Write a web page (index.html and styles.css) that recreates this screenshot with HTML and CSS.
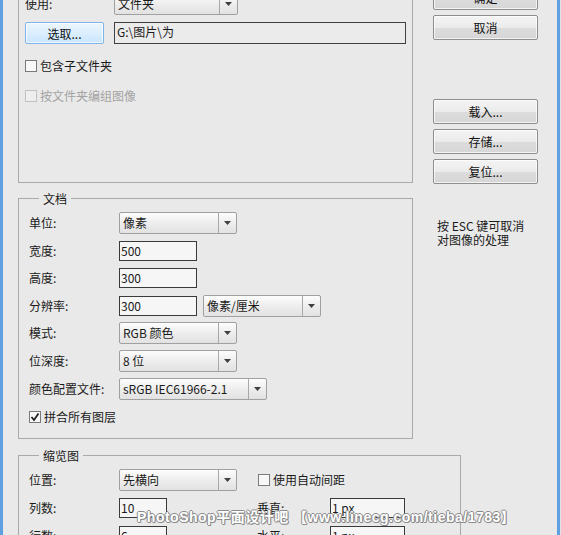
FILE: index.html
```html
<!DOCTYPE html>
<html lang="zh-CN">
<head>
<meta charset="utf-8">
<title>联系表</title>
<link rel="stylesheet" href="styles.css">
</head>
<body>
<div class="win">
  <div class="layout">
    <div class="grp src">
      <div class="row r-use">
        <span class="lbl l89">使用:</span>
        <div class="sel w124"><span class="sel-val">文件夹</span><span class="sel-btn"><svg width="7" height="4" viewBox="0 0 7 4"><path d="M0 0h7L3.5 4z" fill="#404040"/></svg></span></div>
      </div>
      <div class="row r-pick">
        <span class="btn blue w79">选取...</span>
        <span class="path">G:\图片\为</span>
      </div>
      <label class="chk r-c1"><span class="box"></span>包含子文件夹</label>
      <label class="chk dis r-c2"><span class="box"></span>按文件夹编组图像</label>
    </div>

    <div class="side">
      <span class="btn">确定</span>
      <span class="btn">取消</span>
      <span class="btn mt">载入...</span>
      <span class="btn">存储...</span>
      <span class="btn">复位...</span>
      <p class="esc">按 ESC 键可取消<br>对图像的处理</p>
    </div>

    <fieldset class="grp doc">
      <legend>文档</legend>
      <div class="rows">
        <div class="row"><span class="lbl">单位:</span><div class="sel w118"><span class="sel-val">像素</span><span class="sel-btn"><svg width="7" height="4" viewBox="0 0 7 4"><path d="M0 0h7L3.5 4z" fill="#404040"/></svg></span></div></div>
        <div class="row"><span class="lbl">宽度:</span><span class="inp w78">500</span></div>
        <div class="row"><span class="lbl">高度:</span><span class="inp w78">300</span></div>
        <div class="row"><span class="lbl">分辨率:</span><span class="inp w78">300</span><div class="sel w118 ml6"><span class="sel-val">像素/厘米</span><span class="sel-btn"><svg width="7" height="4" viewBox="0 0 7 4"><path d="M0 0h7L3.5 4z" fill="#404040"/></svg></span></div></div>
        <div class="row"><span class="lbl">模式:</span><div class="sel w118"><span class="sel-val">RGB 颜色</span><span class="sel-btn"><svg width="7" height="4" viewBox="0 0 7 4"><path d="M0 0h7L3.5 4z" fill="#404040"/></svg></span></div></div>
        <div class="row"><span class="lbl">位深度:</span><div class="sel w118"><span class="sel-val">8 位</span><span class="sel-btn"><svg width="7" height="4" viewBox="0 0 7 4"><path d="M0 0h7L3.5 4z" fill="#404040"/></svg></span></div></div>
        <div class="row"><span class="lbl">颜色配置文件:</span><div class="sel w148"><span class="sel-val">sRGB IEC61966-2.1</span><span class="sel-btn"><svg width="7" height="4" viewBox="0 0 7 4"><path d="M0 0h7L3.5 4z" fill="#404040"/></svg></span></div></div>
      </div>
      <label class="chk r-flat"><span class="box on"><svg width="10" height="10" viewBox="0 0 10 10"><path d="M1.5 5l2.5 3L8.5 1.5" fill="none" stroke="#222" stroke-width="1.8"/></svg></span>拼合所有图层</label>
    </fieldset>

    <fieldset class="grp thumb">
      <legend>缩览图</legend>
      <div class="rows t-rows">
        <div class="row"><span class="lbl">位置:</span><div class="sel w118"><span class="sel-val">先横向</span><span class="sel-btn"><svg width="7" height="4" viewBox="0 0 7 4"><path d="M0 0h7L3.5 4z" fill="#404040"/></svg></span></div>
          <label class="chk ml21"><span class="box"></span>使用自动间距</label></div>
        <div class="row"><span class="lbl">列数:</span><span class="inp w48">10</span><span class="lbl2">垂直:</span><span class="inp w75">1 px</span></div>
        <div class="row"><span class="lbl">行数:</span><span class="inp w48">6</span><span class="lbl2">水平:</span><span class="inp w75">1 px</span></div>
      </div>
    </fieldset>
  </div>
</div>
<div class="wm">PhotoShop平面设计吧 【www.linecg.com/tieba/1783】</div>
</body>
</html>
```

FILE: styles.css
```css
* { box-sizing: border-box; }
html, body { margin: 0; padding: 0; }
body {
  background: #dfe3e8;
  font-family: "Noto Sans CJK SC", "Liberation Sans", sans-serif;
  font-size: 12px;
  color: #1a1a1a;
  width: 561px;
  height: 535px;
  overflow: hidden;
  position: relative;
}
.win {
  width: 560px;
  height: 535px;
  background: #e9e9e9;
  border-left: 3px solid #5fa0e2;
  border-right: 3px solid #5fa0e2;
  padding-left: 15px;
  overflow: hidden;
}
.layout {
  margin-top: -30px;
  display: grid;
  grid-template-columns: 395px 105px;
  column-gap: 20px;
  align-items: start;
}
.grp {
  border: 1px solid #a9a9a9;
  margin: 0;
}
.src {
  grid-column: 1;
  grid-row: 1;
  height: 213px;
  padding: 22px 0 0 6px;
}
.side {
  grid-column: 2;
  grid-row: 1 / span 2;
  padding-top: 15px;
  display: flex;
  flex-direction: column;
  gap: 5px;
}
.row {
  display: flex;
  align-items: center;
  height: 22px;
}
.lbl { width: 90px; flex: none; line-height: 16px; }
.l89 { width: 89px; }
.lbl2 { width: 73px; margin-left: 90px; flex: none; line-height: 16px; }
.r-pick { margin-top: 7px; }
.r-c1 { margin-top: 14px; }
.r-c2 { margin-top: 14px; }

.sel {
  display: flex;
  height: 22px;
  border: 1px solid #a0a0a0;
  border-radius: 2px;
  background: linear-gradient(#fdfdfd, #ececec 55%, #e2e2e2);
  flex: none;
}
.sel-val { flex: 1; padding-left: 3px; line-height: 19px; white-space: nowrap; overflow: hidden; }
.sel-btn {
  width: 18px;
  border-left: 1px solid #a8a8a8;
  display: flex;
  align-items: center;
  justify-content: center;
}
.w118 { width: 118px; }
.w124 { width: 124px; }
.w148 { width: 148px; }
.ml6 { margin-left: 6px; }
.ml21 { margin-left: 21px; }

.inp {
  height: 20px;
  border: 1px solid #3a3a3a;
  background: #f6f6f6;
  padding-left: 1px;
  line-height: 17px;
  flex: none;
}
.w78 { width: 78px; }
.w48 { width: 48px; }
.w75 { width: 75px; }

.btn {
  display: flex;
  align-items: center;
  justify-content: center;
  height: 25px;
  border: 1px solid #8e8e8e;
  border-radius: 2px;
  background: linear-gradient(#f4f4f4, #ebebeb 50%, #dcdcdc 51%, #d6d6d6);
  box-shadow: inset 0 0 0 1px rgba(255,255,255,0.7);
  color: #111;
}
.btn.mt { margin-top: 54px; }
.btn.blue {
  height: 22px;
  border-color: #7eb4ea;
  background: linear-gradient(#ecf6fd, #dcefff 50%, #c9e5fb);
  flex: none;
}
.w79 { width: 79px; }
.path {
  margin-left: 10px;
  width: 292px;
  height: 22px;
  border: 1px solid #404040;
  background: #ebebeb;
  padding-left: 2px;
  line-height: 18px;
}

.chk { display: flex; align-items: center; height: 16px; line-height: 16px; }
.box {
  width: 12px;
  height: 12px;
  border: 1px solid #7a7a7a;
  background: #f8f8f8;
  margin-right: 3px;
  display: flex;
  align-items: center;
  justify-content: center;
  flex: none;
}
.chk.dis { color: #a3a3a3; }
.chk.dis .box { border-color: #c2c2c2; background: #eeeeee; }

.esc { margin: 30px 0 0 4px; line-height: 14px; color: #1a1a1a; }

fieldset.grp legend {
  padding: 0 4px;
  margin-left: 10px;
  line-height: 17px;
  font-size: 12px;
}
.doc {
  grid-column: 1;
  grid-row: 2;
  margin-top: 7px;
  padding: 5px 0 13px 10px;
}
.rows { display: flex; flex-direction: column; gap: 5.6px; }
.r-flat { margin-top: 9px; }
.thumb {
  grid-column: 1 / span 2;
  grid-row: 3;
  width: 443px;
  margin-top: 8px;
  padding: 5px 0 20px 10px;
}
.t-rows { gap: 6px; }

.wm {
  position: absolute;
  left: 137px;
  top: 509px;
  font-family: "Liberation Sans", "Noto Sans CJK SC", sans-serif;
  font-weight: bold;
  font-size: 14px;
  letter-spacing: 0.5px;
  line-height: 17px;
  color: #ffffff;
  white-space: nowrap;
  text-shadow: 1px 0 #8a8a8a, -1px 0 #8a8a8a, 0 1px #8a8a8a, 0 -1px #8a8a8a, 1px 1px #9a9a9a;
}
```
